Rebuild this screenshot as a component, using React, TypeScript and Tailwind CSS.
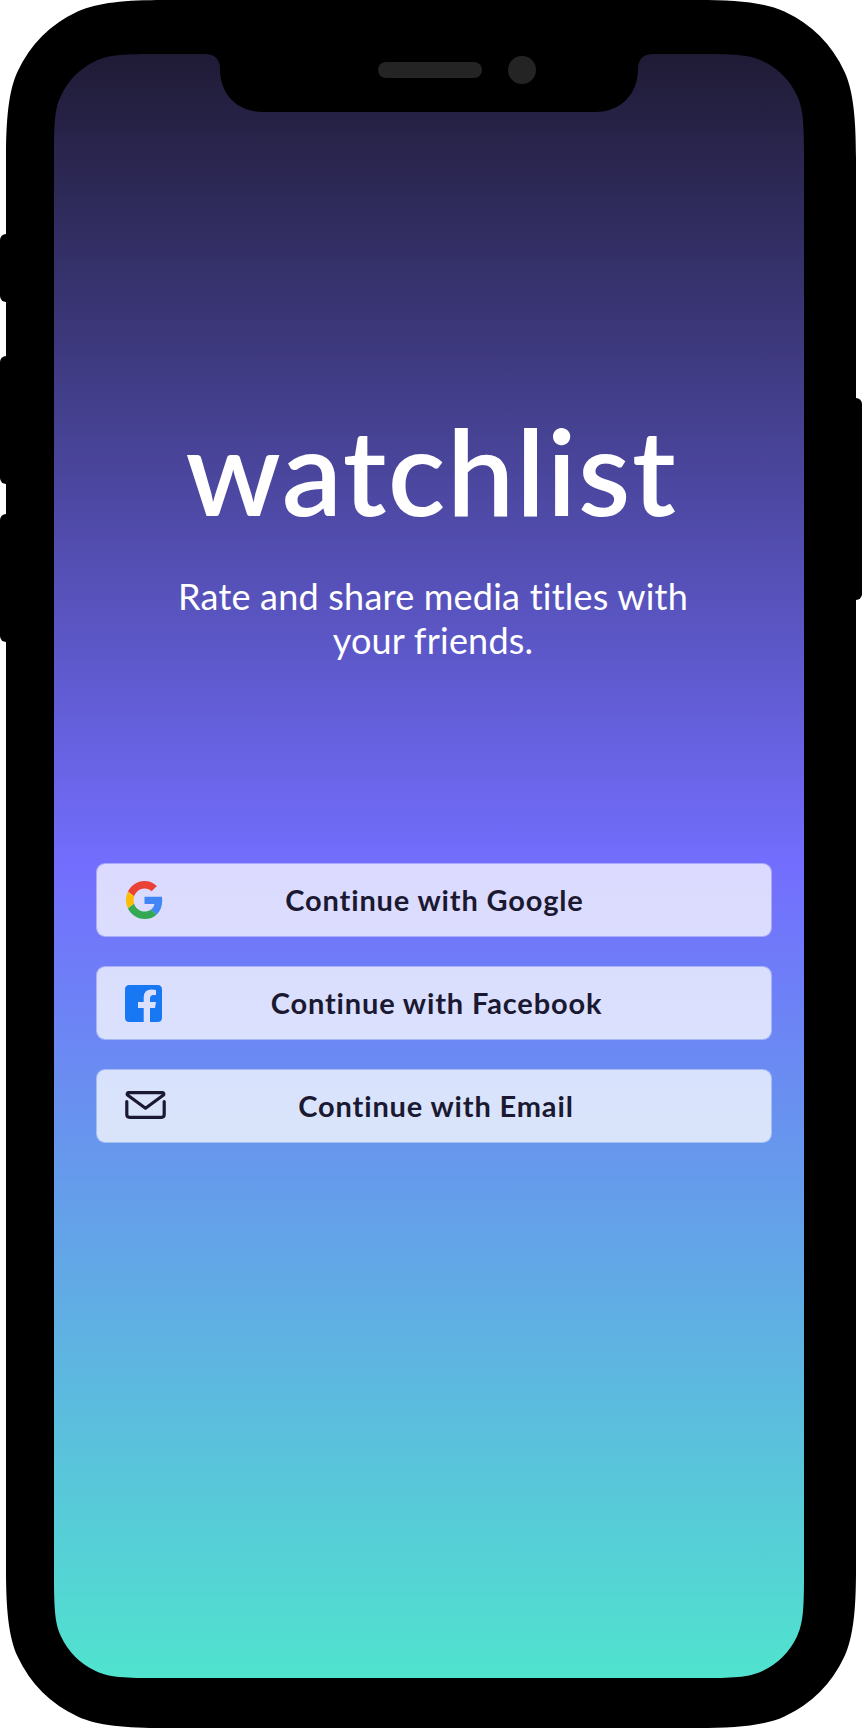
import React, { type ReactNode } from "react";

function GoogleIcon() {
  return (
    <svg viewBox="0 0 48 48" className="ml-[0.5px] h-[38px] w-[37px]" preserveAspectRatio="none" aria-hidden="true">
      <path fill="#EA4335" d="M24 9.5c3.54 0 6.71 1.22 9.21 3.6l6.85-6.85C35.9 2.38 30.47 0 24 0 14.62 0 6.51 5.38 2.56 13.22l7.98 6.19C12.43 13.72 17.74 9.5 24 9.5z" />
      <path fill="#4285F4" d="M46.98 24.55c0-1.57-.15-3.09-.38-4.55H24v9.02h12.94c-.58 2.96-2.26 5.48-4.78 7.18l7.73 6c4.51-4.18 7.09-10.36 7.09-17.65z" />
      <path fill="#FBBC05" d="M10.53 28.59c-.48-1.45-.76-2.99-.76-4.59s.27-3.14.76-4.59l-7.98-6.19C.92 16.46 0 20.12 0 24c0 3.88.92 7.54 2.56 10.78l7.97-6.19z" />
      <path fill="#34A853" d="M24 48c6.48 0 11.93-2.13 15.89-5.81l-7.73-6c-2.15 1.45-4.92 2.3-8.16 2.3-6.26 0-11.57-4.22-13.47-9.91l-7.98 6.19C6.51 42.62 14.62 48 24 48z" />
    </svg>
  );
}

function FacebookIcon() {
  return (
    <svg viewBox="0 0 37 37" className="size-[37px]" aria-hidden="true">
      <path fill="#1877F2" d="M4.5 0H32.5Q37 0 37 4.5V32.5Q37 37 32.5 37H25V23H30L31 17H25V13.5Q25 10 28.5 10H31V5Q29 4.5 26.5 4.5Q18.7 4.5 18.7 12.5V17H13V23H18.7V37H4.5Q0 37 0 32.5V4.5Q0 0 4.5 0Z" />
    </svg>
  );
}

function MailIcon() {
  return (
    <svg viewBox="0 0 41 28" className="mb-0.5 h-7 w-[41px]" fill="none" stroke="#1B1931" strokeWidth="3.2" strokeLinecap="round" strokeLinejoin="round" aria-hidden="true">
      <path d="M1.8 10.5V23.5Q1.8 26.3 4.6 26.3H36.4Q39.2 26.3 39.2 23.5V10.5" />
      <path d="M3.5 1.6H37.5Q39.6 2.4 38.5 4L20.5 17.2L2.5 4Q1.4 2.4 3.5 1.6Z" />
    </svg>
  );
}

function LoginButton({ icon, label, nudge }: { icon: ReactNode; label: string; nudge?: string }) {
  return (
    <button className="grid h-[74px] w-full grid-cols-[70px_1fr_94px] items-center rounded-[9px] border border-white/40 bg-white/75 bg-clip-padding pl-7 text-[29px] font-bold leading-9 tracking-[0.85px] text-[#1B1931]">
      {icon}
      <span className={`whitespace-nowrap text-center ${nudge ?? ""}`}>{label}</span>
    </button>
  );
}

export default function App() {
  return (
    <div className="relative h-[1728px] w-[862px] overflow-hidden bg-white font-['Lato',sans-serif]">
      <div className="absolute left-0 top-[234px] h-[68px] w-5 rounded-md bg-black" />
      <div className="absolute left-0 top-[356px] h-32 w-5 rounded-md bg-black" />
      <div className="absolute left-0 top-[514px] h-32 w-5 rounded-md bg-black" />
      <div className="absolute right-0 top-[398px] h-[202px] w-5 rounded-md bg-black" />
      <div className="mx-auto h-[1728px] w-[850px] bg-black pl-12 pt-[54px] [clip-path:path('M0_158C0_120_2.5_91_11.6_71.6A124_124_0_0_1_71.6_11.6C91_2.5_120_0_158_0H692C730_0_759_2.5_778.4_11.6A124_124_0_0_1_838.4_71.6C847.5_91_850_120_850_158V1570C850_1608_847.5_1637_838.4_1656.4A124_124_0_0_1_778.4_1716.4C759_1725.5_730_1728_692_1728H158C120_1728_91_1725.5_71.6_1716.4A124_124_0_0_1_11.6_1656.4C2.5_1637_0_1608_0_1570Z')]">
        <main className="relative flex h-[1624px] w-[750px] flex-col bg-[linear-gradient(180deg,#1F1B35_0%,#736EFE_50%,#50E3CE_100%)] pl-[42px] pr-8 [clip-path:path('M0_100C0_66_1.5_53.4_6.8_42.1A73_73_0_0_1_42.1_6.8C53.4_1.5_66_0_100_0H650C684_0_696.6_1.5_707.9_6.8A73_73_0_0_1_743.2_42.1C748.5_53.4_750_66_750_100V1524C750_1558_748.5_1570.6_743.2_1581.9A73_73_0_0_1_707.9_1617.2C696.6_1622.5_684_1624_650_1624H100C66_1624_53.4_1622.5_42.1_1617.2A73_73_0_0_1_6.8_1581.9C1.5_1570.6_0_1558_0_1524Z')]">
          <svg viewBox="0 0 750 60" className="absolute left-0 top-0 h-[60px] w-[750px]" aria-hidden="true">
            <path d="M152 0Q166 1 166 15C166 40 183 58 209 58H541C567 58 584 40 584 15Q584 1 598 0Z" />
            <rect x="324" y="8" width="104" height="16" rx="8" fill="#242424" />
            <circle cx="468" cy="16" r="14" fill="#242424" />
          </svg>
          <h1 className="mt-[344px] flex h-[146px] items-start justify-center whitespace-nowrap pr-[5px] text-[120px] font-semibold leading-[144px] tracking-[1.6px] text-white">watchlist</h1>
          <p className="mt-[30px] h-[90px] whitespace-nowrap pr-[2px] text-center text-[36px] leading-[44px] tracking-[0.22px] text-white">Rate and share media titles with<br />your friends.</p>
          <div className="mt-[199px] flex flex-col gap-[29px]">
            <LoginButton icon={<GoogleIcon />} label="Continue with Google" nudge="pr-[3px]" />
            <LoginButton icon={<FacebookIcon />} label="Continue with Facebook" nudge="pl-[1px]" />
            <LoginButton icon={<MailIcon />} label="Continue with Email" />
          </div>
        </main>
      </div>
    </div>
  );
}
